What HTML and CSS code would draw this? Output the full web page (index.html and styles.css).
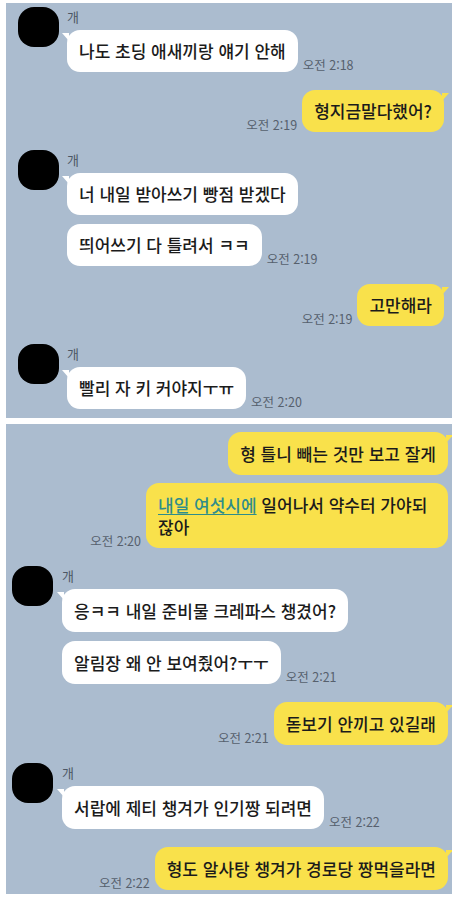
FILE: index.html
```html
<!DOCTYPE html>
<html lang="ko">
<head>
  <meta charset="UTF-8" />
  <meta name="viewport" content="width=device-width, initial-scale=1.0"/>
  <title>개</title>
  <link rel="stylesheet" href="styles.css">
</head>
<body>

<section class="chat chat-a">
  <div class="row in">
    <div class="avatar"></div>
    <div class="msgs">
      <div class="name">개</div>
      <div class="line">
        <p class="bubble tail">나도 초딩 애새끼랑 얘기 안해</p>
        <span class="time">오전 2:18</span>
      </div>
    </div>
  </div>

  <div class="row out">
    <div class="line">
      <span class="time">오전 2:19</span>
      <p class="bubble me tail">형지금말다했어?</p>
    </div>
  </div>

  <div class="row in">
    <div class="avatar"></div>
    <div class="msgs">
      <div class="name">개</div>
      <div class="line">
        <p class="bubble tail">너 내일 받아쓰기 빵점 받겠다</p>
      </div>
      <div class="line">
        <p class="bubble">띄어쓰기 다 틀려서 ㅋㅋ</p>
        <span class="time">오전 2:19</span>
      </div>
    </div>
  </div>

  <div class="row out">
    <div class="line">
      <span class="time">오전 2:19</span>
      <p class="bubble me tail">고만해라</p>
    </div>
  </div>

  <div class="row in">
    <div class="avatar"></div>
    <div class="msgs">
      <div class="name">개</div>
      <div class="line">
        <p class="bubble tail">빨리 자 키 커야지ㅜㅠ</p>
        <span class="time">오전 2:20</span>
      </div>
    </div>
  </div>
</section>

<section class="chat chat-b">
  <div class="row out">
    <div class="line">
      <p class="bubble me tail">형 틀니 빼는 것만 보고 잘게</p>
    </div>
    <div class="line">
      <span class="time">오전 2:20</span>
      <p class="bubble me"><span class="link">내일 여섯시에</span> 일어나서 약수터 가야되 잖아</p>
    </div>
  </div>

  <div class="row in">
    <div class="avatar"></div>
    <div class="msgs">
      <div class="name">개</div>
      <div class="line">
        <p class="bubble tail">응ㅋㅋ 내일 준비물 크레파스 챙겼어?</p>
      </div>
      <div class="line">
        <p class="bubble">알림장 왜 안 보여줬어?ㅜㅜ</p>
        <span class="time">오전 2:21</span>
      </div>
    </div>
  </div>

  <div class="row out">
    <div class="line">
      <span class="time">오전 2:21</span>
      <p class="bubble me tail">돋보기 안끼고 있길래</p>
    </div>
  </div>

  <div class="row in">
    <div class="avatar"></div>
    <div class="msgs">
      <div class="name">개</div>
      <div class="line">
        <p class="bubble tail">서랍에 제티 챙겨가 인기짱 되려면</p>
        <span class="time">오전 2:22</span>
      </div>
    </div>
  </div>

  <div class="row out">
    <div class="line">
      <span class="time">오전 2:22</span>
      <p class="bubble me tail">형도 알사탕 챙겨가 경로당 짱먹을라면</p>
    </div>
  </div>
</section>

</body>
</html>
```

FILE: styles.css
```css
* {
  box-sizing: border-box;
}
body {
  margin: 0;
  padding: 3px 7px 5px 6px;
  background: #ffffff;
  font-family: "Noto Sans CJK KR", "Noto Sans", sans-serif;
  color: #1b1b1b;
}
.chat {
  background: #abbccf;
  display: flex;
  flex-direction: column;
  gap: 18px;
  overflow: hidden;
}
.chat-a {
  height: 415px;
  padding: 4px 8px 0 12px;
}
.chat-b {
  margin-top: 6px;
  height: 470px;
  padding: 8px 4px 0 6px;
}
.row.in {
  display: flex;
  gap: 8px;
}
.chat-b .row.in {
  gap: 9px;
}
.row.out {
  display: flex;
  flex-direction: column;
  align-items: flex-end;
  gap: 8px;
}
.avatar {
  flex: none;
  width: 41px;
  height: 40px;
  border-radius: 16px;
  background: #000;
}
.msgs {
  display: flex;
  flex-direction: column;
  align-items: flex-start;
}
.name {
  font-size: 13px;
  line-height: 15px;
  padding-top: 2px;
  margin-bottom: 6px;
  color: #4c5764;
}
.line {
  display: flex;
  align-items: flex-end;
  gap: 5px;
}
.msgs .line + .line {
  margin-top: 9px;
}
.bubble {
  position: relative;
  margin: 0;
  max-width: 302px;
  padding: 10px 12px;
  font-size: 17px;
  line-height: 22px;
  font-weight: 500;
  background: #ffffff;
  border-radius: 13px;
}
.chat-b .bubble {
  padding: 11px 12px 10px;
}
.bubble.me {
  background: #f9e14b;
}
.tail::before {
  content: "";
  position: absolute;
  top: 3px;
  left: -5px;
  border-top: 8px solid #ffffff;
  border-left: 7px solid transparent;
}
.bubble.me.tail::before {
  left: auto;
  right: -5px;
  border-top-color: #f9e14b;
  border-left: none;
  border-right: 7px solid transparent;
}
.time {
  font-size: 12.5px;
  line-height: 14px;
  color: #56606d;
  white-space: nowrap;
}
.link {
  color: #2f8d8b;
  text-decoration: underline;
  text-underline-offset: 2px;
}
```
